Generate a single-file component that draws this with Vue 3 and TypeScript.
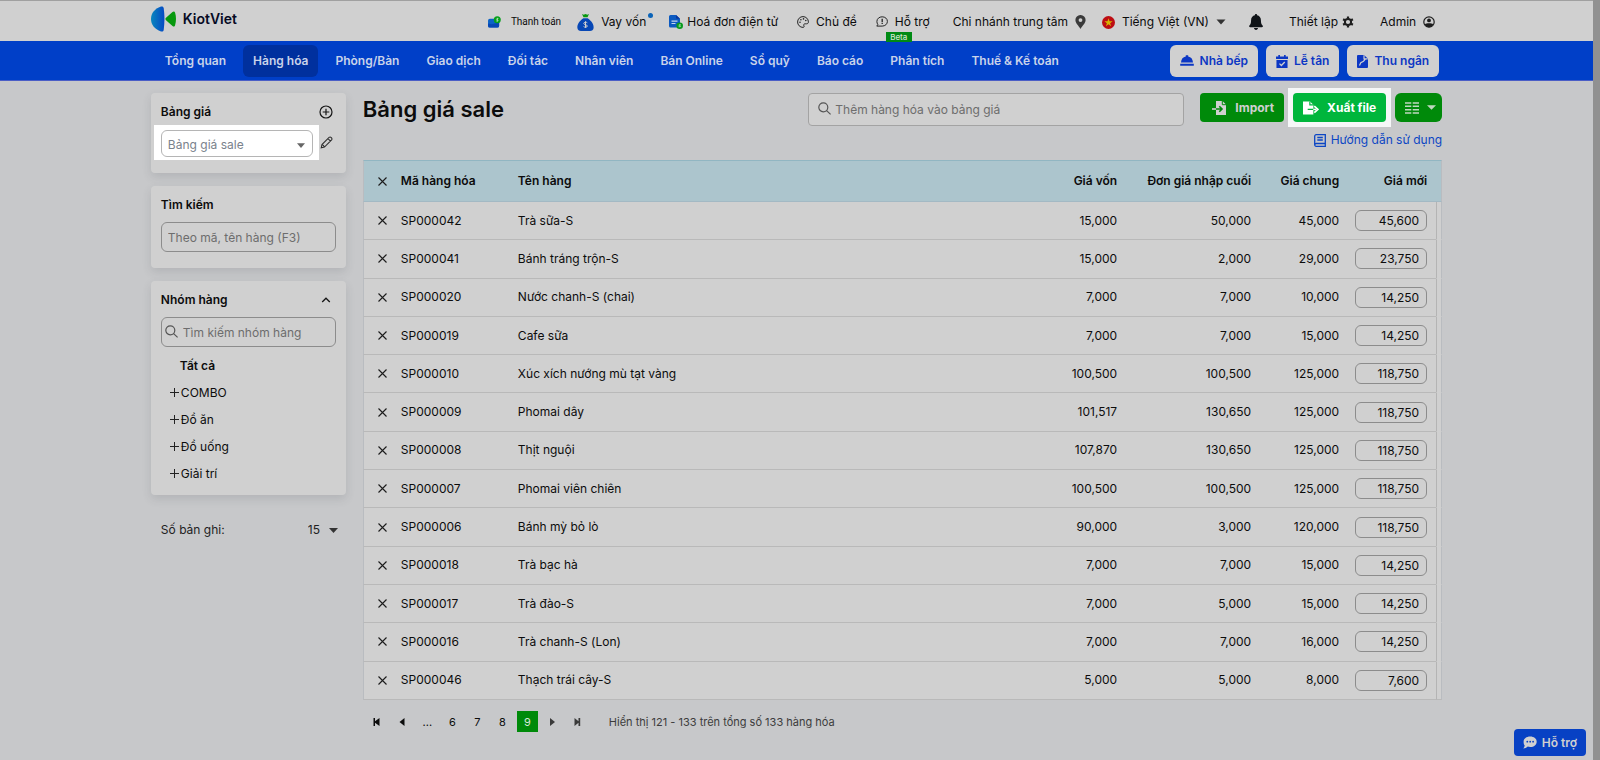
<script setup lang="ts">
import { ref } from 'vue'

interface PriceRow {
  code: string
  name: string
  cost: string
  lastImport: string
  common: string
  price: string
}

const navItems: string[] = [
  'Tổng quan', 'Hàng hóa', 'Phòng/Bàn', 'Giao dịch', 'Đối tác', 'Nhân viên',
  'Bán Online', 'Sổ quỹ', 'Báo cáo', 'Phân tích', 'Thuế & Kế toán',
]
const activeNav = ref('Hàng hóa')

const groups: string[] = ['COMBO', 'Đồ ăn', 'Đồ uống', 'Giải trí']
const pages: number[] = [6, 7, 8, 9]
const currentPage = ref(9)

const priceBook = ref('Bảng giá sale')
const pageSize = ref('15')
const search = ref('')
const groupSearch = ref('')
const addProduct = ref('')

const make = (code: string, name: string, cost: string, lastImport: string, common: string, price: string): PriceRow =>
  ({ code, name, cost, lastImport, common, price })

const rows = ref<PriceRow[]>([
  make('SP000042', 'Trà sữa-S', '15,000', '50,000', '45,000', '45,600'),
  make('SP000041', 'Bánh tráng trộn-S', '15,000', '2,000', '29,000', '23,750'),
  make('SP000020', 'Nước chanh-S (chai)', '7,000', '7,000', '10,000', '14,250'),
  make('SP000019', 'Cafe sữa', '7,000', '7,000', '15,000', '14,250'),
  make('SP000010', 'Xúc xích nướng mù tạt vàng', '100,500', '100,500', '125,000', '118,750'),
  make('SP000009', 'Phomai dây', '101,517', '130,650', '125,000', '118,750'),
  make('SP000008', 'Thịt nguội', '107,870', '130,650', '125,000', '118,750'),
  make('SP000007', 'Phomai viên chiên', '100,500', '100,500', '125,000', '118,750'),
  make('SP000006', 'Bánh mỳ bỏ lò', '90,000', '3,000', '120,000', '118,750'),
  make('SP000018', 'Trà bạc hà', '7,000', '7,000', '15,000', '14,250'),
  make('SP000017', 'Trà đào-S', '7,000', '5,000', '15,000', '14,250'),
  make('SP000016', 'Trà chanh-S (Lon)', '7,000', '7,000', '16,000', '14,250'),
  make('SP000046', 'Thạch trái cây-S', '5,000', '5,000', '8,000', '7,600'),
])
</script>

<template>
  <div class="page">
    <div class="content">
      <header class="topbar">
        <div class="wrap topbar-inner">
          <a href="#" class="logo">
            <svg width="26" height="26" viewBox="0 0 26 26" aria-hidden="true">
              <defs>
                <linearGradient id="lg" x1="0" x2="1">
                  <stop offset="0" stop-color="#0a86bd" />
                  <stop offset="1" stop-color="#0549c4" />
                </linearGradient>
              </defs>
              <path d="M10 .6c1.500-.4 2.300 0 2.700 1.500 1 7.500 1 14.300 0 21.800-.4 1.500-1.200 1.900-2.700 1.500C3.500 23.300 0 18.500 0 13S3.500 2.700 10 .6z" fill="url(#lg)" />
              <path d="M15 11.800 21.500 6c1.200-.9 2.200-.6 2.600.8 1.200 4.200 1.200 8.200 0 12.400-.4 1.400-1.400 1.700-2.600.8L15 14.200c-.8-.8-.8-1.600 0-2.400z" fill="#06980e" />
            </svg>
            <span>KiotViet</span>
          </a>

          <div class="tools">
            <a href="#" class="tool small">
              <svg width="13" height="12" viewBox="0 0 14 13" aria-hidden="true">
                <rect x="0" y="3" width="12" height="9.500" rx="2" fill="#0c63c6" />
                <path d="M0 8l4 1 8-2v3.500a2 2 0 0 1-2 2H2a2 2 0 0 1-2-2z" fill="#0847b4" />
                <circle cx="10" cy="4" r="3.800" fill="#07a01c" />
                <path d="M11.300 2.800H9.700a.7.700 0 0 0 0 1.300h.8a.7.700 0 0 1 0 1.300H8.800M10.100 2v4" stroke="#c9e5c9" stroke-width=".7" fill="none" />
              </svg>
              <span>Thanh toán</span>
            </a>
            <a href="#" class="tool gap-s">
              <svg width="17" height="17" viewBox="0 0 17 17" aria-hidden="true">
                <path d="M5 0l1.700.7L8.500 0l1.800.7L12 0l-1.500 3.200h-4z" fill="#06980e" />
                <path d="M6.300 4.300h4.400C14.500 7 17 10.500 16.600 14c-.2 2-1.600 3-3.600 3H4c-2 0-3.400-1-3.600-3C0 10.500 2.500 7 6.300 4.300z" fill="#0747b5" />
                <path d="M10.300 8.800c-.9-1-3.500-.8-3.500.7 0 1.600 3.500.9 3.500 2.500s-2.800 1.600-3.700.5M8.500 7.300v6.500" stroke="#d0d0d0" stroke-width="1" fill="none" />
              </svg>
              <span class="dotted">Vay vốn</span>
            </a>
            <a href="#" class="tool tight gap-l">
              <svg width="14" height="14" viewBox="0 0 14 14" aria-hidden="true">
                <path d="M1.500 0H7l4 3.800V11a1.500 1.500 0 0 1-1.500 1.500h-8A1.500 1.500 0 0 1 0 11V1.500A1.500 1.500 0 0 1 1.500 0z" fill="#0c5ac0" />
                <path d="M7 0l4 3.800H8a1 1 0 0 1-1-1z" fill="#0836a0" />
                <path d="M2.500 6.200h6M2.500 8.500h4" stroke="#c5d5ec" stroke-width="1.200" />
                <circle cx="10.700" cy="10.700" r="3.300" fill="#079a1c" />
                <path d="M11.800 9.700h-1.400a.5.500 0 0 0 0 1h.7a.5.500 0 0 1 0 1H9.600" stroke="#c9e5c9" stroke-width=".7" fill="none" />
              </svg>
              <span>Hoá đơn điện tử</span>
            </a>
            <a href="#" class="tool gap-m">
              <svg width="12" height="12" viewBox="0 0 12 12" fill="none" stroke="#252525" stroke-width="1" aria-hidden="true">
                <path d="M6 .6A5.400 5.400 0 1 0 6 11.400c1.200 0 1.300-.9.900-1.600-.6-1.100 0-2 1.300-2h1.300c1.200 0 1.900-.7 1.900-1.900C11.400 3 9 .6 6 .6z" />
                <g fill="#252525" stroke="none">
                  <circle cx="3" cy="6.300" r=".8" /><circle cx="3.900" cy="3.700" r=".8" /><circle cx="6.500" cy="2.900" r=".8" /><circle cx="8.800" cy="4.500" r=".8" />
                </g>
              </svg>
              <span>Chủ đề</span>
            </a>
            <a href="#" class="tool gap-m support">
              <svg width="12" height="12" viewBox="0 0 12 12" fill="none" stroke="#252525" stroke-width="1" aria-hidden="true">
                <path d="M6.200.8c3 0 5.200 2 5.200 4.600s-2.200 4.700-5.200 4.700H.8l1-1.600C1.200 7.700.9 6.600.9 5.400.9 2.800 3.200.8 6.200.8z" />
                <path d="M6.200 2.800v3.400M6.200 7v1.100" stroke-width="1.300" />
              </svg>
              <span>Hỗ trợ</span>
              <b class="beta">Beta</b>
            </a>
            <a href="#" class="tool gap-l">
              <span>Chi nhánh trung tâm</span>
              <svg width="11" height="14" viewBox="0 0 11 14" aria-hidden="true">
                <path d="M5.500 0A5 5 0 0 0 .4 5.100C.4 8.300 3.700 11 5.500 14c1.800-3 5.100-5.700 5.100-8.900A5 5 0 0 0 5.500 0zm0 3.200a1.900 1.900 0 1 1 0 3.800 1.900 1.900 0 0 1 0-3.800z" fill="#3a3a3a" />
              </svg>
            </a>
            <button type="button" class="tool gap-s">
              <svg width="13" height="13" viewBox="0 0 13 13" aria-hidden="true">
                <circle cx="6.500" cy="6.500" r="6.500" fill="#bd0d12" />
                <path d="M6.500 2.300l1 3h3.100L8.100 7.200l1 3-2.600-1.900-2.600 1.900 1-3-2.500-1.900h3.100z" fill="#d6b400" />
              </svg>
              <span>Tiếng Việt (VN)</span>
              <svg width="10" height="6" viewBox="0 0 10 6" aria-hidden="true"><path d="M.5.500h9L5 5.500z" fill="#333" /></svg>
            </button>
            <button type="button" class="tool gap-l" aria-label="Thông báo">
              <svg width="14" height="16" viewBox="0 0 14 16" aria-hidden="true">
                <path d="M7 0c.7 0 1.100.5 1.100 1.200 2.300.5 3.800 2.300 3.800 4.800 0 3.500.8 4.500 1.700 5.500.7.800.2 1.700-.7 1.700H1.100c-.9 0-1.400-.9-.7-1.700C1.300 10.500 2.100 9.500 2.100 6c0-2.500 1.500-4.300 3.800-4.800C5.900.5 6.300 0 7 0zM5 14.100h4C9 15.200 8.100 16 7 16s-2-.8-2-1.900z" fill="#101418" />
              </svg>
            </button>
            <a href="#" class="tool tight gap-xl">
              <span>Thiết lập</span>
              <svg width="12" height="12" viewBox="0 0 12 12" fill="none" stroke="#1e1e1e" aria-hidden="true">
                <circle cx="6" cy="6" r="3.100" stroke-width="2" />
                <path d="M6 .4v2M6 9.600v2M1.100 3.200l1.800 1M9.100 7.800l1.800 1M1.100 8.800l1.800-1M9.100 4.200l1.800-1" stroke-width="2.200" />
              </svg>
            </a>
            <a href="#" class="tool gap-xl">
              <span>Admin</span>
              <svg width="12" height="12" viewBox="0 0 12 12" aria-hidden="true">
                <circle cx="6" cy="6" r="5.200" fill="none" stroke="#1e1e1e" stroke-width="1.200" />
                <circle cx="6" cy="4.400" r="1.900" fill="#1e1e1e" />
                <path d="M1.800 8.200C3.500 6.900 8.500 6.900 10.200 8.200 9 10.600 7.500 11.200 6 11.200S3 10.600 1.800 8.200z" fill="#1e1e1e" />
              </svg>
            </a>
          </div>
        </div>
      </header>

      <nav class="navbar">
        <div class="wrap nav-inner">
          <div class="nav-list">
            <a v-for="item in navItems" :key="item" href="#" class="nav-item" :class="{ active: item === activeNav }" @click.prevent="activeNav = item">{{ item }}</a>
          </div>
          <div class="nav-actions">
            <a href="#" class="nav-btn">
              <svg width="14" height="12" viewBox="0 0 14 12" fill="#0c37c4" aria-hidden="true">
                <path d="M5.800.3h2.400v1.300C11 2 12.800 4.200 13 7.500H1C1.200 4.200 3 2 5.800 1.600zM.2 8.800h13.600v1.900H.2z" />
              </svg>
              Nhà bếp
            </a>
            <a href="#" class="nav-btn">
              <svg width="12" height="13" viewBox="0 0 13 14" aria-hidden="true">
                <path d="M2.500 0h1.800v1.500h4.400V0h1.800v1.500H13V4.300H0V1.500h2.500zM.5 5.300h12V14H.5z" fill="#0c37c4" />
                <path d="M3.800 9.300l2 2 3.700-3.700" stroke="#d0d0d0" stroke-width="1.400" fill="none" />
              </svg>
              Lễ tân
            </a>
            <a href="#" class="nav-btn">
              <svg width="11" height="13" viewBox="0 0 11 13" aria-hidden="true">
                <path d="M1 0h6l4 3.800V12a1 1 0 0 1-1 1H1a1 1 0 0 1-1-1V1a1 1 0 0 1 1-1z" fill="#0c37c4" />
                <path d="M7 .3v3.500h3.700M2.500 10.500l1.300-2.800 2.700-1.500 1.800-2" stroke="#d0d0d0" stroke-width="1.200" fill="none" />
              </svg>
              Thu ngân
            </a>
          </div>
        </div>
      </nav>

      <div class="wrap body">
        <aside class="sidebar">
          <section class="card book-card">
            <div class="card-head">
              <label for="book">Bảng giá</label>
              <button type="button" class="icon-btn" aria-label="Thêm bảng giá">
                <svg width="14" height="14" viewBox="0 0 14 14" fill="none" stroke="#161616" stroke-width="1.200" aria-hidden="true">
                  <circle cx="7" cy="7" r="6" /><path d="M7 3.700v6.600M3.700 7h6.600" />
                </svg>
              </button>
            </div>
            <div class="book-row">
              <div class="spot select-spot">
                <div class="select-box">
                  <select id="book" v-model="priceBook">
                    <option>Bảng giá sale</option>
                  </select>
                  <svg class="caret" width="8" height="5" viewBox="0 0 8 5" aria-hidden="true"><path d="M0 .3h8L4 5z" fill="#666" /></svg>
                </div>
              </div>
              <button type="button" class="icon-btn" aria-label="Sửa bảng giá">
                <svg width="13" height="13" viewBox="0 0 14 14" fill="none" stroke="#2c2c2c" stroke-width="1.100" aria-hidden="true">
                  <path d="M1.300 12.700l.8-3.500 7.700-7.700c1.500-1.300 3.900 1 2.700 2.700l-7.700 7.700zM8.600 2.800l2.700 2.700M2.100 9.300c1.200.2 2.200 1.200 2.500 2.500" />
                </svg>
              </button>
            </div>
          </section>

          <section class="card">
            <div class="card-head"><label for="search">Tìm kiếm</label></div>
            <input id="search" v-model="search" class="field" type="text" placeholder="Theo mã, tên hàng (F3)">
          </section>

          <section class="card group-card">
            <div class="card-head">
              <label for="group">Nhóm hàng</label>
              <button type="button" class="icon-btn" aria-label="Thu gọn">
                <svg width="14" height="14" viewBox="0 0 14 14" fill="none" stroke="#161616" stroke-width="1.300" aria-hidden="true"><path d="M3.200 9L7 5.200 10.800 9" /></svg>
              </button>
            </div>
            <div class="search-box">
              <svg class="lens" width="13" height="13" viewBox="0 0 13 13" fill="none" stroke="#555" stroke-width="1.200" aria-hidden="true"><circle cx="5.300" cy="5.300" r="4.500" /><path d="M8.600 8.600l4 3.800" /></svg>
              <input id="group" v-model="groupSearch" class="field" type="text" placeholder="Tìm kiếm nhóm hàng">
            </div>
            <ul class="tree">
              <li><a href="#" class="all">Tất cả</a></li>
              <li v-for="group in groups" :key="group">
                <a href="#">
                  <svg width="9" height="9" viewBox="0 0 9 9" stroke="#222" stroke-width="1" aria-hidden="true"><path d="M4.500 0v9M0 4.500h9" /></svg>{{ group }}
                </a>
              </li>
            </ul>
          </section>

          <div class="records">
            <label for="size">Số bản ghi:</label>
            <div class="size-box">
              <select id="size" v-model="pageSize"><option>15</option></select>
              <svg class="caret" width="9" height="5" viewBox="0 0 9 5" aria-hidden="true"><path d="M0 0h9L4.500 5z" fill="#333" /></svg>
            </div>
          </div>
        </aside>

        <main class="main">
          <div class="head">
            <h1>Bảng giá sale</h1>
            <div class="add-box">
              <svg class="lens" width="13" height="13" viewBox="0 0 13 13" fill="none" stroke="#555" stroke-width="1.200" aria-hidden="true"><circle cx="5.300" cy="5.300" r="4.500" /><path d="M8.600 8.600l4 3.800" /></svg>
              <input v-model="addProduct" type="text" placeholder="Thêm hàng hóa vào bảng giá" aria-label="Thêm hàng hóa vào bảng giá">
            </div>
            <div class="actions">
              <div class="buttons">
                <button type="button" class="btn import">
                  <svg width="15" height="14" viewBox="0 0 15 14" aria-hidden="true">
                    <path d="M4 0h6.500L14 3.500V14H4z" fill="#d0d0d0" />
                    <path d="M10.300 0v3.700H14" stroke="#008a0a" fill="none" />
                    <path d="M4 8h5M7.300 5.300L10 8l-2.700 2.700" stroke="#008a0a" stroke-width="1.600" fill="none" />
                    <path d="M0 8h4" stroke="#d0d0d0" stroke-width="1.600" />
                  </svg>
                  Import
                </button>
                <div class="spot export-spot">
                  <button type="button" class="btn export">
                    <svg width="16" height="14" viewBox="0 0 17 14" aria-hidden="true">
                      <path d="M0 0h7.500L11 3.500V14H0z" fill="#fff" />
                      <path d="M7.300 0v3.700H11M5 8.500h6" stroke="#00b63c" stroke-width="1.300" fill="none" />
                      <path d="M11 8.500h3" stroke="#fff" stroke-width="1.600" />
                      <path d="M12 5l3.800 3.500L12 12" stroke="#fff" stroke-width="1.700" fill="none" />
                    </svg>
                    Xuất file
                  </button>
                </div>
                <button type="button" class="btn columns" aria-label="Chọn cột">
                  <svg width="14" height="12" viewBox="0 0 14 12" stroke="#c0d8c0" stroke-width="1.400" aria-hidden="true">
                    <path d="M0 1h6.300M0 4.300h6.300M0 7.700h6.300M0 11h6.300M7.700 1H14M7.700 4.300H14M7.700 7.700H14M7.700 11H14" />
                  </svg>
                  <svg width="9" height="5" viewBox="0 0 10 5" aria-hidden="true"><path d="M0 0h10L5 5z" fill="#c0d8c0" /></svg>
                </button>
              </div>
              <a href="#" class="guide">
                <svg width="12" height="13" viewBox="0 0 12 13" fill="none" stroke="#0c46c4" stroke-width="1.300" aria-hidden="true">
                  <path d="M2.200.7h9.100v11.600H2.200A1.500 1.500 0 0 1 .7 10.800V2.200A1.500 1.500 0 0 1 2.200.7zM.7 10.800A1.500 1.500 0 0 1 2.200 9.500h9.100M3.300 3.500h5.500M3.300 6h5.500" />
                </svg>
                Hướng dẫn sử dụng
              </a>
            </div>
          </div>

          <table>
            <colgroup>
              <col class="c-del"><col class="c-code"><col><col class="c-cost"><col class="c-last"><col class="c-common"><col class="c-price"><col class="c-gutter">
            </colgroup>
            <thead>
              <tr>
                <th class="del">
                  <button type="button" class="x" aria-label="Xóa tất cả"><svg width="9" height="9" viewBox="0 0 9 9" aria-hidden="true"><path d="M.5.500l8 8M8.500.500l-8 8" /></svg></button>
                </th>
                <th>Mã hàng hóa</th>
                <th>Tên hàng</th>
                <th class="num">Giá vốn</th>
                <th class="num">Đơn giá nhập cuối</th>
                <th class="num">Giá chung</th>
                <th class="num price">Giá mới</th>
                <th class="gutter" />
              </tr>
            </thead>
            <tbody>
              <tr v-for="row in rows" :key="row.code">
                <td class="del">
                  <button type="button" class="x" aria-label="Xóa"><svg width="9" height="9" viewBox="0 0 9 9" aria-hidden="true"><path d="M.5.500l8 8M8.500.500l-8 8" /></svg></button>
                </td>
                <td>{{ row.code }}</td>
                <td>{{ row.name }}</td>
                <td class="num">{{ row.cost }}</td>
                <td class="num">{{ row.lastImport }}</td>
                <td class="num">{{ row.common }}</td>
                <td class="num price"><input v-model="row.price" type="text" :aria-label="'Giá mới ' + row.code"></td>
                <td class="gutter" />
              </tr>
            </tbody>
          </table>

          <div class="pager">
            <button type="button" aria-label="Trang đầu"><svg width="8" height="8" viewBox="0 0 8 8" fill="#0c0c0c" aria-hidden="true"><path d="M.5 0H2v3.200L6.500 0v8L2 4.800V8H.5z" /></svg></button>
            <button type="button" aria-label="Trang trước"><svg width="8" height="8" viewBox="0 0 8 8" fill="#0c0c0c" aria-hidden="true"><path d="M6.500 0v8L1.500 4z" /></svg></button>
            <button type="button">...</button>
            <button v-for="page in pages" :key="page" type="button" :class="{ current: page === currentPage }" @click="currentPage = page">{{ page }}</button>
            <button type="button" aria-label="Trang sau"><svg width="8" height="8" viewBox="0 0 8 8" fill="#3a3a3a" aria-hidden="true"><path d="M2 0l5 4-5 4z" /></svg></button>
            <button type="button" aria-label="Trang cuối"><svg width="8" height="8" viewBox="0 0 8 8" fill="#3a3a3a" aria-hidden="true"><path d="M1.500 0L5.500 3.200V0h1.700v8H5.500V4.800L1.500 8z" /></svg></button>
            <span>Hiển thị 121 - 133 trên tổng số 133 hàng hóa</span>
          </div>
        </main>
      </div>
    </div>
    <div class="scroll-track" />
    <button type="button" class="chat">
      <svg width="14" height="13" viewBox="0 0 14 13" aria-hidden="true">
        <path d="M7.200.5c3.800 0 6.500 2.200 6.500 5.200s-2.700 5.300-6.500 5.300c-.9 0-1.700-.1-2.400-.4C3.500 11.800 2 12.500.3 12.500c.8-.9 1.300-1.800 1.400-2.900C.9 8.600.6 7.200.6 5.700.6 2.700 3.400.5 7.200.5z" fill="#d0d0d0" />
        <g fill="#0741c4"><circle cx="4.300" cy="5.700" r=".9" /><circle cx="7.200" cy="5.700" r=".9" /><circle cx="10.100" cy="5.700" r=".9" /></g>
      </svg>
      Hỗ trợ
    </button>
  </div>
</template>

<style>
body {
  background: #c7c8ca;
}
</style>

<style scoped>
.page {
  display: flex;
  min-height: 100vh;
  background: #c7c8ca;
  color: #0c0c0c;
  font-family: Inter, "Noto Sans", sans-serif;
  font-size: 12px;
  line-height: 16px;
}
.page *,
.page *::before {
  box-sizing: border-box;
}
button,
input,
select {
  margin: 0;
  padding: 0;
  border: 0;
  background: none;
  color: inherit;
  font: inherit;
}
a {
  color: inherit;
  text-decoration: none;
}
svg {
  display: block;
  flex: none;
}
.content {
  flex: 1;
  min-width: 0;
}
.scroll-track {
  width: 7px;
  background: #919191;
}
.wrap {
  width: 81.06%;
  margin: 0 auto;
}

.topbar {
  border-top: 1px solid #a0a0a0;
  background: #d0d0d0;
}
.topbar-inner {
  display: flex;
  align-items: center;
  justify-content: space-between;
  height: 40px;
}
.logo {
  display: flex;
  align-items: center;
  gap: 6px;
  padding-bottom: 4px;
  color: #060a24;
  font-size: 14px;
  font-weight: 600;
}
.tools {
  display: flex;
  align-items: center;
  padding: 2px 7px 0 0;
}
.tool {
  display: flex;
  align-items: center;
  gap: 7px;
  white-space: nowrap;
}
.tool.small {
  gap: 10px;
  font-family: Roboto, sans-serif;
  font-size: 10px;
}
.tool.tight {
  gap: 4px;
}
.gap-s {
  margin-left: 16px;
}
.gap-m {
  margin-left: 19px;
}
.gap-l {
  margin-left: 23px;
}
.gap-xl {
  margin-left: 26px;
}
.dotted {
  position: relative;
}
.dotted::before {
  content: "";
  position: absolute;
  top: -1px;
  right: -7px;
  width: 5px;
  height: 5px;
  border-radius: 50%;
  background: #0a63b8;
}
.support {
  position: relative;
}
.beta {
  position: absolute;
  top: 18px;
  left: 10px;
  width: 26px;
  height: 10px;
  background: #008a14;
  color: #cfe3cf;
  font-size: 8px;
  font-weight: 500;
  line-height: 10px;
  text-align: center;
}

.navbar {
  border-bottom: 1px solid #4a5ec6;
  background: #003fc8;
}
.nav-inner {
  display: flex;
  justify-content: space-between;
  padding: 4px 3px 3px 4px;
}
.nav-list {
  display: flex;
  gap: 7px;
}
.nav-actions {
  display: flex;
  gap: 8px;
}
.nav-item,
.nav-btn {
  display: flex;
  align-items: center;
  height: 32px;
  padding: 0 10px;
  border-radius: 6px;
  color: #c9d3ea;
  font-weight: 600;
  white-space: nowrap;
}
.nav-item.active {
  background: #00309e;
}
.nav-btn {
  gap: 6px;
  background: #d0d0d0;
  color: #0c37c4;
}

.body {
  display: flex;
  gap: 17px;
  padding-top: 12px;
}
.sidebar {
  display: flex;
  flex-direction: column;
  flex: none;
  gap: 13px;
  width: 195px;
}
.card {
  padding: 10px 10px 16px;
  border-radius: 4px;
  background: #d0d0d0;
  box-shadow: 0 4px 10px rgba(60, 64, 70, 0.14);
}
.card-head {
  display: flex;
  align-items: center;
  justify-content: space-between;
  height: 18px;
  padding-right: 3px;
  font-weight: 600;
}
.icon-btn {
  display: flex;
  align-items: center;
}
.book-row {
  display: flex;
  align-items: center;
  justify-content: space-between;
  margin-top: 4px;
  padding-right: 3px;
}
.spot {
  background: #fff;
}
.select-spot {
  margin-left: -7px;
  padding: 5px 6px 3px 7px;
}
.select-box,
.search-box,
.size-box,
.add-box {
  position: relative;
}
select {
  appearance: none;
}
.select-box select {
  display: block;
  width: 152px;
  height: 27px;
  padding: 2px 22px 0 6px;
  border: 1px solid #b5b5b5;
  border-radius: 6px;
  color: #7a828c;
}
.caret {
  position: absolute;
  top: 13px;
  right: 8px;
  pointer-events: none;
}
.book-card {
  padding-bottom: 13px;
}
.field {
  display: block;
  width: 100%;
  height: 30px;
  margin-top: 8px;
  padding: 0 6px;
  border: 1px solid #8c8c8c;
  border-radius: 6px;
}
input::placeholder {
  color: #6d6d6d;
  opacity: 1;
}
.lens {
  position: absolute;
  top: 8px;
  left: 4px;
}
.search-box .field {
  padding-left: 21px;
}
.group-card {
  padding-bottom: 8px;
}
.tree {
  margin: 6px 0 0;
  padding: 0 0 0 9px;
  list-style: none;
}
.tree a {
  display: flex;
  align-items: center;
  gap: 2px;
  height: 27px;
}
.tree .all {
  height: 26px;
  padding-left: 10px;
  font-weight: 600;
}
.records {
  display: flex;
  align-items: center;
  justify-content: space-between;
  padding: 12px 8px 0 10px;
  color: #222;
}
.size-box select {
  width: 30px;
  height: 20px;
  text-align: left;
}
.size-box .caret {
  top: 8px;
  right: 0;
}

.main {
  flex: 1;
  min-width: 0;
}
.head {
  display: flex;
  align-items: flex-start;
  height: 67px;
}
h1 {
  flex: 1;
  margin: 0;
  font-size: 22px;
  font-weight: 600;
  line-height: 32px;
}
.add-box {
  width: 376px;
  margin-right: 16px;
}
.add-box input {
  display: block;
  width: 100%;
  height: 33px;
  padding: 0 12px 0 26px;
  border: 1px solid #a3a3a3;
  border-radius: 4px;
  background: #d0d0d0;
}
.add-box .lens {
  top: 9px;
  left: 10px;
}
.buttons {
  display: flex;
  align-items: flex-start;
}
.btn {
  display: flex;
  align-items: center;
  gap: 8px;
  height: 29px;
  padding: 0 10px;
  border-radius: 4px;
  background: #008a0a;
  color: #d0d0d0;
  font-weight: 700;
  white-space: nowrap;
}
.btn.import {
  padding-left: 12px;
}
.btn.columns {
  padding: 0 6px 0 10px;
  border-radius: 6px;
}
.export-spot {
  margin: -5px 4px -5px 4px;
  padding: 5px;
  background: #f6f7f8;
}
.btn.export {
  background: #00b63c;
  color: #fff;
}
.guide {
  display: flex;
  align-items: center;
  justify-content: flex-end;
  gap: 5px;
  margin-top: 10px;
  color: #0c46c4;
}

table {
  width: 100%;
  height: 540px;
  border-collapse: separate;
  border-spacing: 0;
  table-layout: fixed;
  background: #d0d0d0;
}
.c-del { width: 28px; }
.c-code { width: 117px; }
.c-cost { width: 110px; }
.c-last { width: 134px; }
.c-common { width: 88px; }
.c-price { width: 87px; }
.c-gutter { width: 6px; }
th,
td {
  padding: 0 10px;
  border-bottom: 1px solid #b9b9b9;
  text-align: left;
  white-space: nowrap;
}
th {
  height: 42px;
  border-top: 1px solid #91b6c2;
  border-bottom-color: #a3b9c4;
  background: #acc5cd;
  font-weight: 600;
}
.num {
  text-align: right;
}
.del {
  padding: 0 0 0 14px;
  border-left: 1px solid #b9bcc0;
}
.x {
  display: block;
}
.x svg {
  fill: none;
  stroke: #1c1c1c;
  stroke-width: 1.1;
}
.price {
  padding: 0 9px 0 6px;
}
.price input {
  display: block;
  width: 100%;
  height: 21px;
  padding: 0 7px;
  border: 1px solid #8c8c8c;
  border-radius: 6px;
  text-align: right;
}
.gutter {
  padding: 0;
  border-right: 1px solid #b9bcc0;
}
td.gutter {
  border-left: 1px solid #b4b4b4;
  border-bottom-color: transparent;
}
tr:last-child td.gutter {
  border-bottom-color: #b9b9b9;
}

.pager {
  display: flex;
  align-items: center;
  gap: 4px;
  padding: 11px 0 0 4px;
}
.pager button {
  display: flex;
  align-items: center;
  justify-content: center;
  width: 21px;
  height: 21px;
  font-size: 11px;
}
.pager button.current {
  background: #008a0a;
  color: #d8e8d8;
}
.pager span {
  margin-left: 17px;
  color: #3c3c3c;
  font-size: 11px;
}

.chat {
  position: fixed;
  right: 14px;
  bottom: 4px;
  display: flex;
  align-items: center;
  gap: 5px;
  height: 27px;
  padding: 0 9px;
  border-radius: 4px;
  background: #0741c4;
  color: #d0d0d0;
  font-weight: 600;
}
</style>
